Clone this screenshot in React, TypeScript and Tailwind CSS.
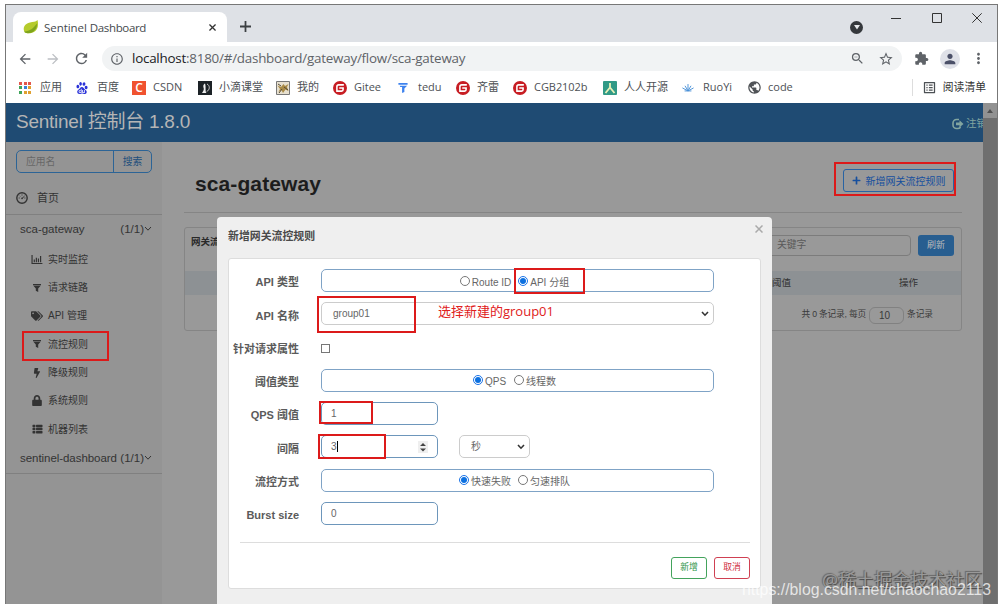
import type { ReactNode } from 'react';
import { FaBolt, FaLock, FaTags, FaThList, FaPlus } from 'react-icons/fa';
import {
  MdArrowBack,
  MdArrowForward,
  MdExtension,
  MdInfoOutline,
  MdListAlt,
  MdMoreVert,
  MdPerson,
  MdPublic,
  MdRefresh,
  MdStarBorder,
  MdZoomOut,
} from 'react-icons/md';
import { SiBaidu, SiGitee } from 'react-icons/si';
import clsx from 'clsx';

const uiFont = "font-['Open_Sans','Noto_Sans_CJK_SC',sans-serif]";
const pageFont = "font-['Liberation_Sans','Noto_Sans_CJK_SC',sans-serif]";

function LeafLogo() {
  return (
    <svg viewBox="0 0 16 16" className="h-4 w-4">
      <path d="M14.5 1c-2 2.2-4.300 1.800-7.500 2.500C2 4.600.4 7.600.8 11c.2 2 1.800 3.200 4 3.300C10 14.600 14 12 14.800 7.500 15.200 5 15 3 14.500 1z" fill="#b5cb2c" />
      <path d="M1 12.500C6 12.800 11 9 13.800 4.500 14.800 9 11 14.300 4.800 14.300 3 14.200 1.600 13.500 1 12.500z" fill="#7fa51c" />
    </svg>
  );
}

function AppsIcon() {
  const colors = ['#e2574c', '#e2574c', '#e2574c', '#3fa55b', '#3b82d8', '#e0a030', '#3fa55b', '#e0a030', '#e0a030'];
  return (
    <div className="grid h-3 w-3 grid-cols-3 gap-[1.5px]">
      {colors.map((color, i) => (
        <span key={i} style={{ background: color }} />
      ))}
    </div>
  );
}

function ChartIcon() {
  return (
    <svg viewBox="0 0 12 10" className="h-[9px] w-[12px]">
      <path d="M.5 0v9.500H12M3 8V5M5.300 8V3M7.600 8V4M10 8V1" fill="none" stroke="currentColor" strokeWidth="1.300" />
    </svg>
  );
}

function FilterIcon() {
  return (
    <svg viewBox="0 0 10 10" className="h-[10px] w-[8px]" fill="currentColor">
      <path d="M0 0h10v1.500H0zM.5 2.200h9L6.500 5.500V10l-3-1.500v-3z" />
    </svg>
  );
}

function GaugeIcon() {
  return (
    <svg viewBox="0 0 12 12" className="h-3 w-3" fill="none" stroke="currentColor">
      <circle cx="6" cy="6" r="5.200" strokeWidth="1.400" />
      <path d="M6 6.500 8.600 4M2.700 6h1M8.400 6h1M6 2.500v1M3.600 3.800l.6.600" />
      <circle cx="6" cy="6.400" r=".8" fill="currentColor" stroke="none" />
    </svg>
  );
}

function LogoutIcon() {
  return (
    <svg viewBox="0 0 12 12" className="h-[12px] w-[13px]">
      <path d="M7.500 1.500H5a3.500 3.500 0 0 0-3.500 3.500v2A3.500 3.500 0 0 0 5 10.500h1.500A2.500 2.500 0 0 0 9 8.500" fill="none" stroke="currentColor" strokeWidth="1.600" />
      <path d="M4.500 4.600H8V2.300L12 6 8 9.300V7.200H4.500z" fill="currentColor" />
    </svg>
  );
}

function Chevron({ className, thin }: { className?: string; thin?: boolean }) {
  return (
    <svg viewBox="0 0 8 6" className={clsx('h-[6px] w-[8px]', className)}>
      <path d="m1 1 3 3.200L7 1" fill="none" stroke="currentColor" strokeWidth={thin ? 1 : 1.600} />
    </svg>
  );
}

function TabStrip() {
  return (
    <div className="flex h-[37px] items-end bg-[#dee1e6]">
      <div className="ml-[7px] flex h-[30px] w-[214px] items-center rounded-t-lg bg-white pl-[10px] pr-[11px]">
        <LeafLogo />
        <span className="ml-[5px] flex-1 pt-px text-[11.5px] tracking-[-0.350px] text-[#45494d]">
          <span className="tracking-[-0.050px]">Sentinel </span>
          Dashboard
        </span>
        <svg viewBox="0 0 8 8" className="h-[7px] w-[7px]">
          <path d="m.5.5 7 7m0-7-7 7" stroke="#333" strokeWidth="1.500" />
        </svg>
      </div>
      <svg viewBox="0 0 10 10" className="mb-[10px] ml-[13px] h-[11px] w-[11px]">
        <path d="M5 0v10M0 5h10" stroke="#3c4043" strokeWidth="1.600" />
      </svg>
      <div className="mb-[8px] ml-auto mr-[28px] flex h-[13px] w-[13px] items-center justify-center rounded-full bg-[#35383c]">
        <svg viewBox="0 0 6 5" className="h-[5px] w-[6px]">
          <path d="M0 0h6L3 4.500z" fill="#e8eaed" />
        </svg>
      </div>
      <div className="mb-[19px] mr-[15px] flex items-center gap-[30.500px]">
        <svg viewBox="0 0 10 10" className="h-[10px] w-[10px]"><path d="M0 5.500h10" stroke="#333" /></svg>
        <svg viewBox="0 0 10 10" className="h-[10px] w-[10px]"><path d="M.5.5h9v9h-9z" fill="none" stroke="#333" /></svg>
        <svg viewBox="0 0 10 10" className="h-[10px] w-[10px]"><path d="m.3.3 9.400 9.400m0-9.400L.3 9.700" stroke="#333" /></svg>
      </div>
    </div>
  );
}

function AddressBar() {
  return (
    <div className="flex h-[33px] items-center pl-[11px] pr-[10px] text-[#5f6368]">
      <MdArrowBack className="h-[16px] w-[16px]" />
      <MdArrowForward className="ml-[12px] h-[16px] w-[16px] text-[#bcbfc3]" />
      <MdRefresh className="ml-[12px] h-[17px] w-[17px]" />
      <div className="ml-[12px] flex h-[25px] w-[800px] items-center rounded-full bg-[#f1f3f4] pl-[8px] pr-[8px]">
        <MdInfoOutline className="h-[14px] w-[14px]" />
        <span className="ml-[8px] flex-1 whitespace-nowrap text-[13.400px] tracking-[-0.230px]">
          <span className="text-[#202124]">localhost</span>:8180/#/dashboard/gateway/flow/sca-gateway
        </span>
        <MdZoomOut className="h-[15px] w-[15px]" />
        <MdStarBorder className="ml-[13px] h-[16px] w-[16px]" />
      </div>
      <MdExtension className="ml-[12px] h-[15px] w-[15px]" />
      <div className="ml-[11px] flex h-[20px] w-[20px] items-center justify-center rounded-full bg-[#dfe1e8]">
        <MdPerson className="h-[16px] w-[16px] text-[#4b5068]" />
      </div>
      <MdMoreVert className="ml-[10px] h-[17px] w-[17px]" />
    </div>
  );
}

function Bookmark({ icon, label, className }: { icon: ReactNode; label: string; className: string }) {
  return (
    <div className={clsx('flex shrink-0 items-center whitespace-nowrap', className)}>
      <span className="flex w-[21px] shrink-0 items-center">{icon}</span>
      {label}
    </div>
  );
}

function BookmarksBar() {
  const gitee = <SiGitee className="h-[14px] w-[14px] text-[#c71d23]" />;
  return (
    <div className="flex h-[28px] items-center pb-[3px] pl-[13px] text-[11px] text-[#4d5155]">
      <Bookmark className="w-[57px]" icon={<AppsIcon />} label="应用" />
      <Bookmark className="w-[56px]" icon={<SiBaidu className="h-[12px] w-[12px] text-[#2a32d8]" />} label="百度" />
      <Bookmark
        className="w-[66px]"
        icon={<span className="flex h-[14px] w-[14px] items-center justify-center bg-[#f0522f] text-[12px] font-semibold text-white">C</span>}
        label="CSDN"
      />
      <Bookmark
        className="w-[78px]"
        icon={
          <svg viewBox="0 0 14 14" className="h-[14px] w-[14px]">
            <path d="M0 0h14v14H0z" fill="#1c2226" />
            <path d="M7 2.500C4.500 4 5.500 6 5.800 7.500 6 9 4.800 11 4 12h4.500C6.800 10 8.300 6 7 2.500z" fill="#eee" />
            <path d="M9 3c3.200 1.500 3 6-.3 7.500" fill="none" stroke="#ccc" />
          </svg>
        }
        label="小滴课堂"
      />
      <Bookmark
        className="w-[57px]"
        icon={
          <svg viewBox="0 0 14 14" className="h-[14px] w-[14px]">
            <path d="M.5.500h13v13H.5z" fill="#e7e0cf" stroke="#777" />
            <path d="M1.500 4.500 5 6l2.500-3L9 5l3.500-2-1.500 3 1.500 4-3-1.500L7 12l-1.500-3-3 2L4 8z" fill="#a98a46" />
            <path d="m2 3 3 2M8 6l4 3M3 12l3-4" stroke="#554a35" />
          </svg>
        }
        label="我的"
      />
      <Bookmark className="w-[64px]" icon={gitee} label="Gitee" />
      <Bookmark
        className="w-[59px]"
        icon={
          <svg viewBox="0 0 12 12" className="h-[11px] w-[12px]">
            <path d="M1 1h10v2H1zM2.500 4h8L7.500 7v4L5 12V5.500H3z" fill="#3d82ee" />
          </svg>
        }
        label="tedu"
      />
      <Bookmark className="w-[57px]" icon={gitee} label="齐雷" />
      <Bookmark className="w-[90px] tracking-[-0.050px]" icon={gitee} label="CGB2102b" />
      <Bookmark
        className="w-[79px]"
        icon={
          <svg viewBox="0 0 14 14" className="h-[14px] w-[14px]">
            <rect width="14" height="14" rx="1" fill="#319a86" />
            <path d="M7 2v4.500L2.500 12M7 6.500 11.500 12" fill="none" stroke="#e9f2b8" strokeWidth="1.800" />
          </svg>
        }
        label="人人开源"
      />
      <Bookmark
        className="w-[65px]"
        icon={
          <svg viewBox="0 0 14 10" className="h-[9px] w-[12px]">
            <path d="M7 9 7 1M7 9 3.500 3M7 9l3.500-6M7 9 .5 5.500M7 9l6.500-3.500M3 9h8" fill="none" stroke="#4990d8" strokeWidth="1.100" />
          </svg>
        }
        label="RuoYi"
      />
      <Bookmark className="w-[60px]" icon={<MdPublic className="h-[15px] w-[15px] text-[#505357]" />} label="code" />
      <div className="ml-auto mr-[11px] flex items-center gap-[6px] border-l border-[#ddd] pl-[9px]">
        <MdListAlt className="h-[15px] w-[15px]" />
        <span className="text-[10.800px] text-[#333]">阅读清单</span>
      </div>
    </div>
  );
}

const menuItems = [
  { icon: <ChartIcon />, label: '实时监控' },
  { icon: <FilterIcon />, label: '请求链路' },
  { icon: <FaTags className="h-[12px] w-[12px]" />, label: 'API 管理' },
  { icon: <FilterIcon />, label: '流控规则' },
  { icon: <FaBolt className="h-[10px] w-[10px]" />, label: '降级规则' },
  { icon: <FaLock className="h-[11px] w-[10px]" />, label: '系统规则' },
  { icon: <FaThList className="h-[10px] w-[11px]" />, label: '机器列表' },
];

function Sidebar() {
  return (
    <aside className="w-[156px] shrink-0 bg-[#949494] pt-[8px] text-[#333]">
      <div className="ml-[10px] flex h-[23px] w-[136px] items-center rounded-[5px] border border-[#2c6496] text-[9.800px]">
        <span className="flex-1 pl-[9px] pt-px text-[#676767]">应用名</span>
        <span className="flex h-full w-[38px] items-center justify-center border-l border-[#2c6496] pt-px text-[#1d4e7c]">搜索</span>
      </div>
      <div className="flex h-[42px] items-center border-b border-[#808080] pl-[10px] pt-[9px] text-[11px]">
        <GaugeIcon />
        <span className="ml-[9px] pt-px">首页</span>
      </div>
      <div className="flex h-[30px] items-center pl-[14px] pr-[10px] text-[11.500px]">
        <span>sca-gateway</span>
        <span className="ml-auto">(1/1)</span>
        <Chevron thin className="mb-[2px]" />
      </div>
      {menuItems.map((item) => (
        <div key={item.label} className="flex h-[28.350px] items-center pl-[25px] text-[10px]">
          <span className="flex w-[12px] justify-center">{item.icon}</span>
          <span className="ml-[5px]">{item.label}</span>
        </div>
      ))}
      <div className="flex h-[31px] items-center border-b border-[#808080] pl-[14px] pr-[10px] pt-px text-[11.500px]">
        <span className="whitespace-nowrap tracking-[-0.050px]">sentinel-dashboard</span>
        <span className="ml-auto">(1/1)</span>
        <Chevron thin className="mb-[2px]" />
      </div>
    </aside>
  );
}

function MainContent() {
  return (
    <main className="flex-1 bg-[#999] pl-[22px] pr-[21px]">
      <div className="flex h-[71px] items-center border-b border-[#858585] pr-[8px] pt-[10px]">
        <h1 className="pl-[11px] pt-[3px] text-[21px] font-bold tracking-[0.100px] text-[#1d1d1d]">sca-gateway</h1>
        <div className="mb-[3px] ml-auto flex h-[23px] w-[111px] items-center justify-center gap-[5px] rounded-[3px] border border-[#2863a3] text-[10px] text-[#164f9e]">
          <FaPlus className="h-[9px] w-[9px]" />
          <span className="pt-px">新增网关流控规则</span>
        </div>
      </div>
      <div className="mt-[14px] h-[104px] rounded-[3px] border border-[#858585] text-[9.500px]">
        <div className="flex h-[43px] items-start pl-[6px] pr-[7px] pt-[7px]">
          <span className="whitespace-nowrap font-bold text-[#292929]">网关流控规则</span>
          <div className="ml-auto flex h-[21px] w-[150px] items-center rounded-[4px] border border-[#7c7c7c] pl-[15px] text-[9.800px] text-[#5a5a5a]">
            关键字
          </div>
          <div className="ml-[7px] flex h-[21px] w-[36px] items-center justify-center rounded-[3px] bg-[#285e90] text-[9px] text-[#bbb]">刷新</div>
        </div>
        <div className="flex h-[24px] items-center bg-[#8d9194] text-[#333]">
          <span className="ml-[587px]">阈值</span>
          <span className="ml-auto mr-[43px]">操作</span>
        </div>
        <div className="flex h-[36px] items-center justify-end pr-[28px] pt-[4px] text-[8.700px] text-[#393939]">
          <span className="tracking-[-0.200px]">共 0 条记录, 每页</span>
          <span className="mx-[3px] flex h-[17px] w-[35px] items-center rounded-[6px] border border-[#818181] pl-[9px] text-[10px]">10</span>
          <span>条记录</span>
        </div>
      </div>
    </main>
  );
}

function Radio({ label, checked }: { label: string; checked?: boolean }) {
  return (
    <span className="flex items-center gap-[2px]">
      <span
        className={clsx(
          'flex h-[10px] w-[10px] items-center justify-center rounded-full border',
          checked ? 'border-[#1a73e8]' : 'border-[#777]',
        )}
      >
        {checked && <span className="h-[6px] w-[6px] rounded-full bg-[#0b70e0]" />}
      </span>
      <span className="pt-[3px]">{label}</span>
    </span>
  );
}

function FormRow({ label, children }: { label: string; children: ReactNode }) {
  return (
    <div className="flex h-[33.250px] items-center">
      <span className="flex w-[70px] shrink-0 justify-end whitespace-nowrap pt-[4px] text-[11px] font-bold text-[#5b5b5b]">
        {label}
      </span>
      <div className="ml-[22px] flex flex-1 items-center text-[10px] text-[#666]">{children}</div>
    </div>
  );
}

const wideBox = 'flex h-[23px] w-[393px] items-center rounded-[5px] border';
const smallBox = 'flex h-[23px] w-[117px] items-center rounded-[5px] border border-[#6d96bb] pl-[9px]';

function RuleDialog() {
  return (
    <div className="absolute left-[211px] top-[114px] h-[387px] w-[555px] rounded-t-[4px] bg-[#efefef]">
      <div className="flex h-[41px] items-center justify-between pl-[11px] pr-[9px] text-[10.900px] text-[#4a4a4a]">
        <span className="pb-[2px] font-bold">新增网关流控规则</span>
        <svg viewBox="0 0 8 8" className="mb-[18px] h-[8px] w-[8px]">
          <path d="m.5.5 7 7m0-7-7 7" stroke="#aaa" strokeWidth="1.500" />
        </svg>
      </div>
      <div className="ml-[11px] h-[331px] w-[533px] rounded-[3px] border border-[#ddd] bg-white pt-[5px]">
        <FormRow label="API 类型">
          <div className={clsx(wideBox, 'justify-center gap-[7px] border-[#7fa3c6] pr-[6px]')}>
            <Radio label="Route ID" />
            <Radio label="API 分组" checked />
          </div>
        </FormRow>
        <FormRow label="API 名称">
          <div className={clsx(wideBox, 'justify-between border-[#ccc] pl-[11px] pr-[4px]')}>
            <span>group01</span>
            <Chevron className="text-[#333]" />
          </div>
        </FormRow>
        <FormRow label="针对请求属性">
          <span className="mt-[3px] h-[9px] w-[9px] border border-[#777]" />
        </FormRow>
        <FormRow label="阈值类型">
          <div className={clsx(wideBox, 'justify-center gap-[8px] border-[#7fa3c6] pr-[6px]')}>
            <Radio label="QPS" checked />
            <Radio label="线程数" />
          </div>
        </FormRow>
        <FormRow label="QPS 阈值">
          <div className={smallBox}>1</div>
        </FormRow>
        <FormRow label="间隔">
          <div className={smallBox}>
            <span className="border-r border-black leading-[11px]">3</span>
            <svg viewBox="0 0 10 12" className="ml-auto mr-[9px] h-[12px] w-[10px]">
              <path d="M0 0h10v12H0z" fill="#efefef" />
              <path d="M2 5 5 2l3 3zM2 7.500h6l-3 3z" fill="#444" />
            </svg>
          </div>
          <div className="ml-[21px] flex h-[23px] w-[71px] items-center justify-between rounded-[5px] border border-[#ccc] pl-[11px] pr-[4px]">
            <span>秒</span>
            <Chevron className="text-[#333]" />
          </div>
        </FormRow>
        <FormRow label="流控方式">
          <div className={clsx(wideBox, 'justify-center gap-[7px] border-[#7fa3c6] pr-[6px]')}>
            <Radio label="快速失败" checked />
            <Radio label="匀速排队" />
          </div>
        </FormRow>
        <FormRow label="Burst size">
          <div className={smallBox}>0</div>
        </FormRow>
        <div className="ml-[11px] mr-[10px] mt-[12px] flex justify-end gap-[7px] border-t border-[#ddd] pt-[14px] text-[8.800px]">
          <span className="flex h-[22px] w-[36px] items-center justify-center rounded-[3px] border border-[#43a35c] text-[#2d9549]">新增</span>
          <span className="flex h-[22px] w-[36px] items-center justify-center rounded-[3px] border border-[#cf4052] text-[#cf3044]">取消</span>
        </div>
      </div>
    </div>
  );
}

function Mark({ className }: { className: string }) {
  return <div className={clsx('absolute border-2 border-[#dc1a1a]', className)} />;
}

export default function App() {
  return (
    <div className={clsx('relative h-[609px] w-[1002px] overflow-hidden bg-white pl-[5px] pt-[4px]', uiFont)}>
      <div className="flex h-[600px] w-[993px] flex-col overflow-hidden border-x border-t border-[#777]">
        <TabStrip />
        <AddressBar />
        <BookmarksBar />
        <div className={clsx('relative flex min-h-0 flex-1', pageFont)}>
          <div className="flex w-[977px] flex-col overflow-hidden">
            <header className="flex h-[39px] shrink-0 items-center bg-[#1f4b73] pl-[10px] text-[#b5b5b5]">
              <span className="whitespace-nowrap text-[19px] tracking-[-0.250px]">Sentinel 控制台 1.8.0</span>
              <span className="-mr-[4px] ml-auto flex items-center gap-[2px] whitespace-nowrap pt-[2px] text-[10.500px] text-[#82a5a0]">
                <LogoutIcon />
                注销
              </span>
            </header>
            <div className="flex flex-1">
              <Sidebar />
              <MainContent />
            </div>
          </div>
          <div className="flex w-[14px] flex-col bg-[#6f6f6f]">
            <div className="flex h-[15px] items-center justify-center bg-[#929292]">
              <svg viewBox="0 0 6 4" className="h-[4px] w-[6px]"><path d="M0 4h6L3 0z" fill="#505050" /></svg>
            </div>
          </div>
          <RuleDialog />
        </div>
      </div>

      <Mark className="left-[834px] top-[162px] h-[34px] w-[122px]" />
      <Mark className="left-[22px] top-[331px] h-[30px] w-[87px]" />
      <Mark className="left-[514px] top-[268px] h-[26px] w-[71px]" />
      <Mark className="left-[317px] top-[296px] h-[37px] w-[99px]" />
      <Mark className="left-[319px] top-[401px] h-[23px] w-[54px]" />
      <Mark className="left-[318px] top-[434px] h-[25px] w-[68px]" />
      <span className="absolute left-[438px] top-[301px] whitespace-nowrap text-[13px] leading-[20px] text-[#e02020]">选择新建的group01</span>

      <span className="absolute left-[822px] top-[567px] whitespace-nowrap text-[18px] leading-[26px] text-[#999] [text-shadow:1px_1px_1px_#444,-1px_-1px_1px_#666]">
        @稀土掘金技术社区
      </span>
      <span className={clsx('absolute left-[742px] top-[580px] whitespace-nowrap text-[15.850px] leading-[20px] text-white/75', pageFont)}>
        https://blog.csdn.net/chaochao2113
      </span>
    </div>
  );
}
